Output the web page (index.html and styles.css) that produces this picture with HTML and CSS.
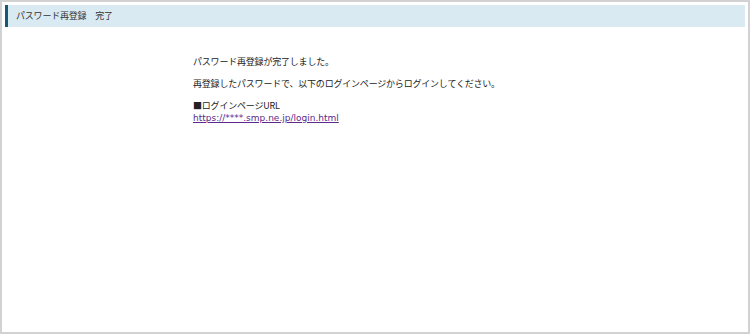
FILE: index.html
```html
<!DOCTYPE html>
<html lang="ja">
<head>
    <meta charset="UTF-8">
    <meta name="viewport" content="width=device-width, initial-scale=1.0">
    <title>パスワード再登録 完了</title>
    <link rel="stylesheet" href="styles.css">
</head>
<body>
    <div class="frame">
        <!-- 見出し -->
        <div class="page-title">パスワード再登録　完了</div>

        <!-- 完了メッセージ -->
        <div class="message">
            <p>パスワード再登録が完了しました。</p>
            <p>再登録したパスワードで、以下のログインページからログインしてください。</p>
            <p class="login-url">
                ■ログインページURL<br>
                <a href="#">https://****.smp.ne.jp/login.html</a>
            </p>
        </div>
    </div>
</body>
</html>
```

FILE: styles.css
```css
* {
    box-sizing: border-box;
}
html, body {
    margin: 0;
    padding: 0;
    background-color: white;
}
body {
    font-family: "Noto Sans CJK JP", "Noto Sans", sans-serif;
    font-size: 9px;
    letter-spacing: -0.2px;
    color: #222;
}
.frame {
    width: 750px;
    height: 334px;
    border: 2px solid #d2d2d2;
    padding: 3px;
}
.page-title {
    height: 22px;
    line-height: 22px;
    background-color: #daeaf2;
    border-left: 3px solid #135a73;
    padding-left: 8px;
    color: #333;
}
.message {
    padding: 28px 0 0 188px;
}
.message p {
    margin: 0 0 9px 0;
    line-height: 13px;
}
.message p + p {
    margin-bottom: 10px;
}
.message .login-url {
    line-height: 12px;
}
.message a {
    color: #5b2a8c;
    letter-spacing: 0;
    font-family: "DejaVu Sans", "Noto Sans", sans-serif;
}
```
